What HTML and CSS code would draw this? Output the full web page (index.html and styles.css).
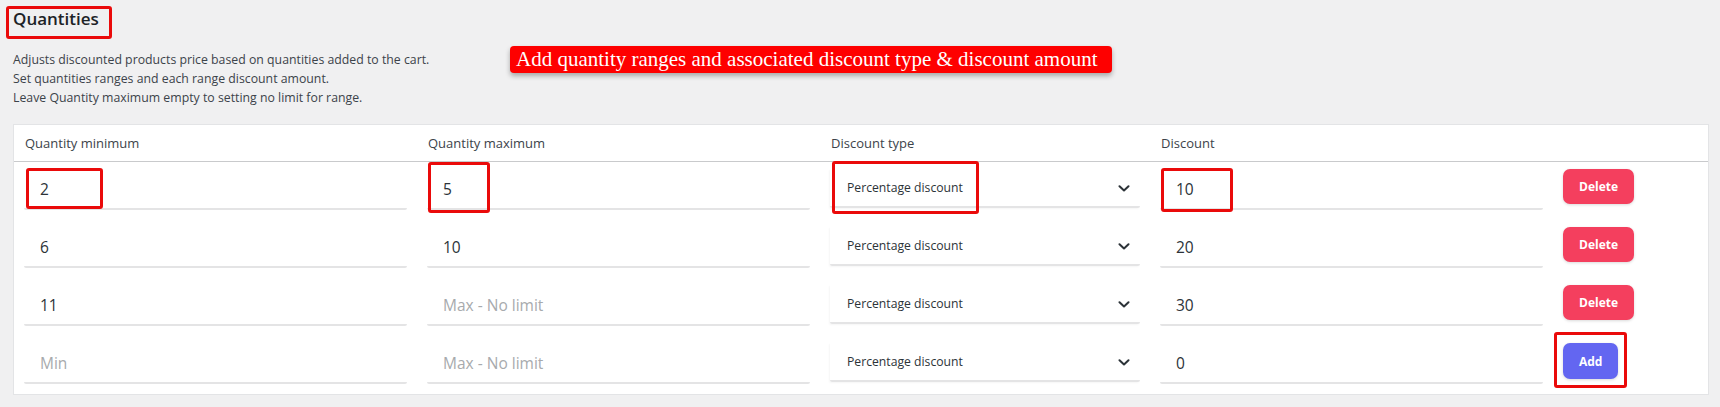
FILE: index.html
```html
<!DOCTYPE html>
<html lang="en">
<head>
<meta charset="utf-8">
<title>Quantities</title>
<link rel="stylesheet" href="styles.css">
</head>
<body>
<div class="page">
  <div class="title-wrap">
    <h2 class="title">Quantities</h2>
    <span class="mark mark-title"></span>
  </div>
  <div class="intro">
    <div class="desc">
      <p>Adjusts discounted products price based on quantities added to the cart.</p>
      <p>Set quantities ranges and each range discount amount.</p>
      <p>Leave Quantity maximum empty to setting no limit for range.</p>
    </div>
    <div class="banner"><span class="banner-text">Add quantity ranges and associated discount type &amp; discount amount</span></div>
  </div>
  <div class="card">
    <div class="row head">
      <div class="label">Quantity minimum</div>
      <div class="label">Quantity maximum</div>
      <div class="label">Discount type</div>
      <div class="label">Discount</div>
      <div></div>
    </div>
    <div class="row">
      <div class="cell"><input class="inp" value="2"><span class="mark mark-min"></span></div>
      <div class="cell"><input class="inp" value="5"><span class="mark mark-max"></span></div>
      <div class="cell"><div class="select"><span>Percentage discount</span><svg class="chev" viewBox="0 0 12 7" width="12" height="7"><path d="M1.5 1.2 L6 5.5 L10.5 1.2" fill="none" stroke="#2c3338" stroke-width="2" stroke-linecap="round" stroke-linejoin="round"/></svg></div><span class="mark mark-type"></span></div>
      <div class="cell"><input class="inp" value="10"><span class="mark mark-disc"></span></div>
      <div class="cell"><button class="btn btn-del">Delete</button></div>
    </div>
    <div class="row">
      <div class="cell"><input class="inp" value="6"></div>
      <div class="cell"><input class="inp" value="10"></div>
      <div class="cell"><div class="select"><span>Percentage discount</span><svg class="chev" viewBox="0 0 12 7" width="12" height="7"><path d="M1.5 1.2 L6 5.5 L10.5 1.2" fill="none" stroke="#2c3338" stroke-width="2" stroke-linecap="round" stroke-linejoin="round"/></svg></div></div>
      <div class="cell"><input class="inp" value="20"></div>
      <div class="cell"><button class="btn btn-del">Delete</button></div>
    </div>
    <div class="row">
      <div class="cell"><input class="inp" value="11"></div>
      <div class="cell"><input class="inp" placeholder="Max - No limit"></div>
      <div class="cell"><div class="select"><span>Percentage discount</span><svg class="chev" viewBox="0 0 12 7" width="12" height="7"><path d="M1.5 1.2 L6 5.5 L10.5 1.2" fill="none" stroke="#2c3338" stroke-width="2" stroke-linecap="round" stroke-linejoin="round"/></svg></div></div>
      <div class="cell"><input class="inp" value="30"></div>
      <div class="cell"><button class="btn btn-del">Delete</button></div>
    </div>
    <div class="row">
      <div class="cell"><input class="inp" placeholder="Min"></div>
      <div class="cell"><input class="inp" placeholder="Max - No limit"></div>
      <div class="cell"><div class="select"><span>Percentage discount</span><svg class="chev" viewBox="0 0 12 7" width="12" height="7"><path d="M1.5 1.2 L6 5.5 L10.5 1.2" fill="none" stroke="#2c3338" stroke-width="2" stroke-linecap="round" stroke-linejoin="round"/></svg></div></div>
      <div class="cell"><input class="inp" value="0"></div>
      <div class="cell"><button class="btn btn-add">Add</button><span class="mark mark-add"></span></div>
    </div>
  </div>
</div>
</body>
</html>
```
FILE: styles.css
```css
* { box-sizing: border-box; }
html, body { margin: 0; padding: 0; }
body {
  background: #f0f0f1;
  font-family: "Open Sans", "Noto Sans", sans-serif;
  color: #3c434a;
  width: 1720px;
  height: 407px;
  overflow: hidden;
}
.page { padding: 7px 11px 0 13px; }

.title-wrap { position: relative; display: inline-block; }
.title {
  margin: 0;
  font-size: 17px;
  line-height: 24px;
  font-weight: 600;
  color: #1d2327;
}

.mark {
  position: absolute;
  border: 3px solid #ea0a0a;
  border-radius: 3px;
  pointer-events: none;
}
.mark-title { left: -7px; top: -1px; width: 106px; height: 33px; }
.mark-min { left: 2px; top: -1px; width: 77px; height: 41px; }
.mark-max { left: 1px; top: -7px; width: 62px; height: 51px; }
.mark-type { left: 2px; top: -8px; width: 147px; height: 53px; }
.mark-disc { left: 1px; top: -1px; width: 72px; height: 44px; }
.mark-add { left: -9px; top: -11px; width: 73px; height: 56px; }

.intro { display: flex; align-items: flex-start; margin-top: 15px; }
.desc { flex: 0 0 497px; padding-top: 4px; font-size: 12.3px; line-height: 19px; color: #3c434a; }
.desc p { margin: 0; }

.banner {
  width: 602px;
  height: 27px;
  background: #fe0000;
  border-radius: 4px;
  box-shadow: 0 3px 5px rgba(0, 0, 0, 0.3);
  padding-left: 6px;
  overflow: hidden;
}
.banner-text {
  display: block;
  font-family: "Liberation Serif", "Times New Roman", serif;
  font-size: 21px;
  line-height: 27px;
  color: #ffffff;
  white-space: nowrap;
}

.card {
  margin-top: 17px;
  width: 1696px;
  background: #ffffff;
  border: 1px solid #e3e4e6;
}
.row {
  display: grid;
  grid-template-columns: 383px 383px 310px 383px auto;
  column-gap: 20px;
  padding: 7px 10px 10px;
  align-items: start;
}
.row.head {
  padding: 8px 10px;
  border-bottom: 1px solid #c9cacc;
}
.label { font-size: 13px; line-height: 20px; color: #3c434a; padding-left: 1px; }

.cell { position: relative; }
.inp {
  display: block;
  width: 100%;
  height: 41px;
  margin: 0;
  padding: 0 16px;
  border: 0;
  border-bottom: 2px solid #e4e4e5;
  border-radius: 0 0 2px 2px;
  background: #ffffff;
  font-family: "Open Sans", "Noto Sans", sans-serif;
  font-size: 15.5px;
  color: #2c3338;
  outline: none;
}
.inp::placeholder { color: #a7aaad; opacity: 1; }

.select {
  height: 39px;
  display: flex;
  align-items: center;
  justify-content: space-between;
  padding: 0 10px 0 17px;
  border-bottom: 2px solid #e4e4e5;
  border-radius: 0 0 2px 2px;
  box-shadow: -1px 1px 2px rgba(0, 0, 0, 0.04);
  font-size: 12.2px;
  color: #2c3338;
}
.chev { display: block; margin-top: 1px; }

.btn {
  display: block;
  height: 35px;
  padding: 0 16px;
  border: 0;
  border-radius: 7px;
  font-family: "Open Sans", "Noto Sans", sans-serif;
  font-size: 12px;
  font-weight: 700;
  color: #ffffff;
  box-shadow: 0 1px 3px rgba(0, 0, 0, 0.15);
}
.btn-del { background: #f43f5e; }
.btn-add { background: #6366f1; height: 36px; }
```
